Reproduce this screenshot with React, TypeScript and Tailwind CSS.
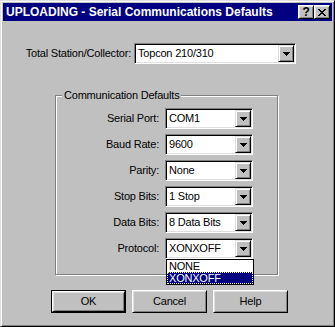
import React from 'react';

const raised =
  'bg-[#c0c0c0] border border-t-[#dfdfdf] border-l-[#dfdfdf] border-r-black border-b-black shadow-[inset_1px_1px_0_#fff,inset_-1px_-1px_0_#808080]';

const btn =
  'bg-[#c0c0c0] border border-t-white border-l-white border-r-black border-b-black shadow-[inset_1px_1px_0_#dfdfdf,inset_-1px_-1px_0_#808080]';

const Arrow = () => (
  <svg width="7" height="4" viewBox="0 0 7 4" shapeRendering="crispEdges">
    <polygon points="0,0 7,0 3.5,4" fill="#000" />
  </svg>
);

const Combo = ({ value, width }: { value: string; width: string }) => (
  <div
    className={`${width} h-[21px] flex border border-t-[#808080] border-l-[#808080] border-r-white border-b-white bg-white p-[1px] shadow-[inset_1px_1px_0_#000,inset_-1px_-1px_0_#dfdfdf]`}
  >
    <span className="flex-1 pl-[2px] leading-[17px] truncate">{value}</span>
    <div className={`${raised} w-[16px] h-[17px] flex items-center justify-center`}>
      <Arrow />
    </div>
  </div>
);

const rows = [
  { label: 'Serial Port:', value: 'COM1' },
  { label: 'Baud Rate:', value: '9600' },
  { label: 'Parity:', value: 'None' },
  { label: 'Stop Bits:', value: '1 Stop' },
  { label: 'Data Bits:', value: '8 Data Bits' },
  { label: 'Protocol:', value: 'XONXOFF' },
];

export default function App() {
  return (
    <div
      className="w-[335px] h-[327px] bg-[#c0c0c0] border border-t-[#dfdfdf] border-l-[#dfdfdf] border-r-black border-b-black shadow-[inset_1px_1px_0_#fff,inset_-1px_-1px_0_#808080] p-[2px] text-[11px] text-black tracking-[-0.2px]"
      style={{ fontFamily: '"Liberation Sans", Arial, sans-serif' }}
    >
      {/* Title bar */}
      <div className="h-[18px] bg-[#000080] flex items-center pl-[3px] pr-[2px]">
        <span className="flex-1 text-white font-bold text-[12px] leading-none tracking-normal">
          UPLOADING - Serial Communications Defaults
        </span>
        <div className={`${btn} w-[16px] h-[14px] flex items-center justify-center font-bold text-[12px] leading-none`}>
          ?
        </div>
        <div className={`${btn} w-[16px] h-[14px] flex items-center justify-center`}>
          <svg width="8" height="7" viewBox="0 0 8 7" shapeRendering="crispEdges">
            <path d="M0 0h2v1h-2zM6 0h2v1h-2zM1 1h2v1h-2zM5 1h2v1h-2zM2 2h4v1h-4zM3 3h2v1h-2zM2 4h4v1h-4zM1 5h2v1h-2zM5 5h2v1h-2zM0 6h2v1h-2zM6 6h2v1h-2z" fill="#000" />
          </svg>
        </div>
      </div>

      {/* Station row */}
      <div className="mt-[22px] flex items-center">
        <span className="w-[131px] text-right pr-[3px]">Total Station/Collector:</span>
        <Combo value="Topcon 210/310" width="w-[162px]" />
      </div>

      {/* Group box */}
      <div className="relative mt-[31px] ml-[52px] w-[223px] border border-[#808080] shadow-[inset_1px_1px_0_#fff,1px_1px_0_#fff] pt-[12px] pb-[15px]">
        <span className="absolute left-[6px] top-[-8px] bg-[#c0c0c0] px-[2px] leading-[14px]">
          Communication Defaults
        </span>
        <div className="flex flex-col gap-[5px]">
          {rows.map((r) => (
            <div key={r.label} className="flex items-center">
              <span className="w-[109px] text-right pr-[6px]">{r.label}</span>
              <Combo value={r.value} width="w-[88px]" />
            </div>
          ))}
        </div>
        {/* open dropdown list */}
        <div className="absolute left-[110px] top-[163px] w-[88px] border border-black bg-white flex flex-col">
          <span className="h-[12px] leading-[12px] pl-[2px]">NONE</span>
          <span className="h-[12px] leading-[10px] pl-[1px] bg-[#000080] text-white border border-dotted border-[#ffff80]">
            XONXOFF
          </span>
        </div>
      </div>

      {/* Buttons */}
      <div className="mt-[15px] ml-[48px] flex gap-[6px]">
        <div className="border border-black">
          <div className={`${btn} w-[73px] h-[21px] flex items-center justify-center`}>OK</div>
        </div>
        <div className={`${btn} w-[75px] h-[23px] flex items-center justify-center`}>Cancel</div>
        <div className={`${btn} w-[75px] h-[23px] flex items-center justify-center`}>Help</div>
      </div>
    </div>
  );
}
